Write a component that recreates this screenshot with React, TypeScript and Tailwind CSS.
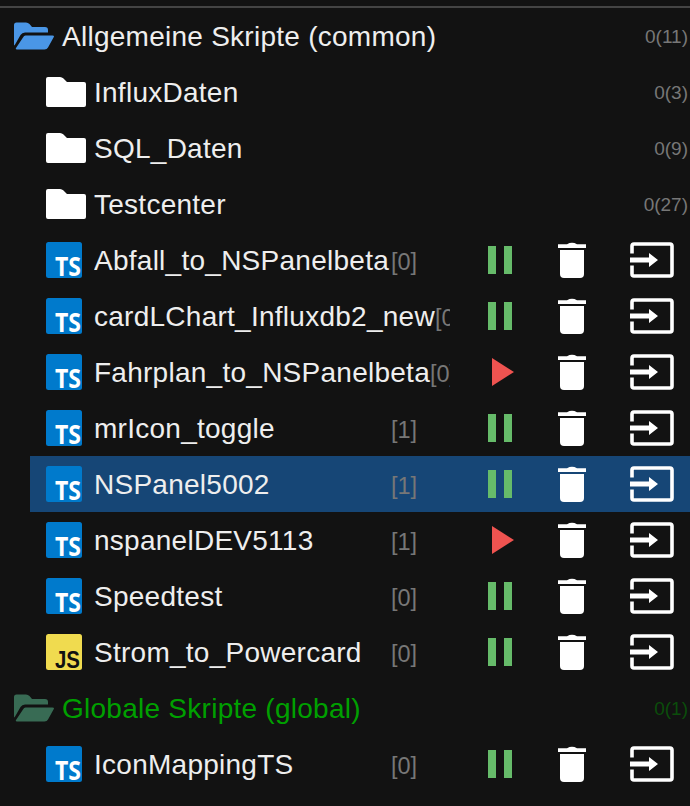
const font = "font-['Liberation_Sans',Arial,sans-serif]"

function FolderClosed() {
  return (
    <svg width="40" height="30" viewBox="0 0 40 30" className="shrink-0">
      <path d="M2 0 H14 Q16 0 17.5 1.5 L21 5 H38 Q40 5 40 7 V28 Q40 30 38 30 H2 Q0 30 0 28 V2 Q0 0 2 0 Z" fill="#fff" />
    </svg>
  )
}

function FolderOpen({ color }: { color: string }) {
  return (
    <svg width="40" height="28" viewBox="0 0 40 28" className="shrink-0">
      <path d="M0 3 Q0 0.5 2.5 0.5 H12 Q14 0.5 15.5 2 L18 5 H31 Q34 5 34 8 V10.5 H11 Q8 10.5 6.5 13 L0.5 23.5 Q0 23 0 22 Z" fill={color} />
      <path d="M11.5 13.5 H38.5 Q40.5 13.5 39.8 15 L34 25.5 Q33 27.5 30.5 27.5 H3 Q1.2 27.5 2 26 L9 15.5 Q10 13.5 11.5 13.5 Z" fill={color} />
    </svg>
  )
}

function FileIcon({ kind }: { kind: 'ts' | 'js' }) {
  const ts = kind === 'ts'
  return (
    <svg width="36" height="36" viewBox="0 0 36 36" className="shrink-0">
      <rect width="36" height="36" rx="2.5" fill={ts ? '#007acc' : '#f0db4f'} />
      {ts ? (
        <text x="9" y="34" textLength="26" lengthAdjust="spacingAndGlyphs" fontFamily="'Open Sans', sans-serif" fontWeight="700" fontSize="26" fill="#fff">TS</text>
      ) : (
        <text x="9" y="34" textLength="25" lengthAdjust="spacingAndGlyphs" fontFamily="'Liberation Sans', sans-serif" fontWeight="700" fontSize="23" fill="#111">JS</text>
      )}
    </svg>
  )
}

function Pause() {
  return (
    <div className="flex gap-2 h-7">
      <div className="w-2 bg-[#66bb6a]" />
      <div className="w-2 bg-[#66bb6a]" />
    </div>
  )
}

function Play() {
  return (
    <svg width="22" height="28" viewBox="0 0 22 28" className="ml-1.5">
      <path d="M0 0 L22 14 L0 28 Z" fill="#ef5350" />
    </svg>
  )
}

function Trash() {
  return (
    <svg width="28" height="36" viewBox="0 0 28 36">
      <path d="M0 6 V2.2 H9 Q14 -0.6 19 2.2 H28 V6 Z" fill="#fff" />
      <path d="M2 8 H26 V32 Q26 36 22 36 H6 Q2 36 2 32 Z" fill="#fff" />
    </svg>
  )
}

function MoveIcon() {
  return (
    <svg width="44" height="36" viewBox="0 0 44 36">
      <path d="M2 11.5 V4 Q2 2 4 2 H40 Q42 2 42 4 V32 Q42 34 40 34 H4 Q2 34 2 32 V23.5" fill="none" stroke="#fff" strokeWidth="3.6" />
      <path d="M0 15.5 H19 V11 L28 18 L19 25 V20.5 H0 Z" fill="#fff" />
    </svg>
  )
}

type Script = { name: string; kind: 'ts' | 'js'; count: number; running: boolean; selected?: boolean }

const common: Script[] = [
  { name: 'Abfall_to_NSPanelbeta', kind: 'ts', count: 0, running: true },
  { name: 'cardLChart_Influxdb2_new', kind: 'ts', count: 0, running: true },
  { name: 'Fahrplan_to_NSPanelbeta', kind: 'ts', count: 0, running: false },
  { name: 'mrIcon_toggle', kind: 'ts', count: 1, running: true },
  { name: 'NSPanel5002', kind: 'ts', count: 1, running: true, selected: true },
  { name: 'nspanelDEV5113', kind: 'ts', count: 1, running: false },
  { name: 'Speedtest', kind: 'ts', count: 0, running: true },
  { name: 'Strom_to_Powercard', kind: 'js', count: 0, running: true },
]

function ScriptRow({ s }: { s: Script }) {
  return (
    <div className={`h-14 ml-[30px] pl-4 flex items-center ${s.selected ? 'bg-[#164676]' : ''}`}>
      <FileIcon kind={s.kind} />
      <div className="w-[356px] ml-3 pt-0.5 overflow-hidden whitespace-nowrap">
        <span className="inline-block min-w-[297px] text-[28px] tracking-[0.26px] text-[#eee]">{s.name}</span>
        <span className="text-[23.5px] text-[#777]">[{s.count}]</span>
      </div>
      <div className="w-[72px] ml-[14px] flex justify-center">{s.running ? <Pause /> : <Play />}</div>
      <div className="w-[72px] flex justify-center"><Trash /></div>
      <div className="ml-[22px]"><MoveIcon /></div>
    </div>
  )
}

function FolderRow({ name, count }: { name: string; count: string }) {
  return (
    <div className="h-14 ml-[30px] pl-4 pr-0.5 flex items-center">
      <FolderClosed />
      <span className="ml-2 flex-1 pt-0.5 text-[28px] tracking-[0.26px] text-[#eee]">{name}</span>
      <span className="pt-0.5 text-[19px] text-[#777]">{count}</span>
    </div>
  )
}

function GroupRow({ name, count, color, textCls, countCls }: { name: string; count: string; color: string; textCls: string; countCls: string }) {
  return (
    <div className="h-14 pl-3.5 pr-0.5 flex items-center">
      <FolderOpen color={color} />
      <span className={`ml-2 flex-1 pt-0.5 text-[28px] tracking-[0.26px] ${textCls}`}>{name}</span>
      <span className={`pt-0.5 text-[19px] ${countCls}`}>{count}</span>
    </div>
  )
}

export default function App() {
  return (
    <div className={`w-[690px] h-[806px] overflow-hidden bg-[#121212] ${font}`}>
      <div className="h-1.5 bg-[#121212]" />
      <div className="h-0.5 bg-[#444]" />
      <GroupRow name="Allgemeine Skripte (common)" count="0(11)" color="#4a96e6" textCls="text-[#eee]" countCls="text-[#777]" />
      <FolderRow name="InfluxDaten" count="0(3)" />
      <FolderRow name="SQL_Daten" count="0(9)" />
      <FolderRow name="Testcenter" count="0(27)" />
      {common.map(s => <ScriptRow key={s.name} s={s} />)}
      <GroupRow name="Globale Skripte (global)" count="0(1)" color="#386b54" textCls="text-[#00a000]" countCls="text-[#0b4d0b]" />
      <ScriptRow s={{ name: 'IconMappingTS', kind: 'ts', count: 0, running: true }} />
    </div>
  )
}
